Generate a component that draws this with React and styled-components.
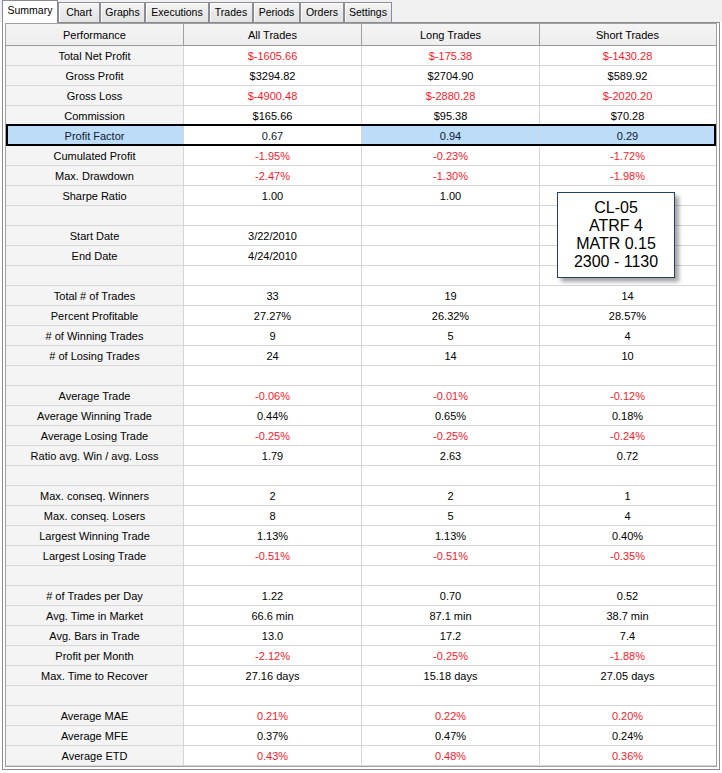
import React from "react";
import styled, { createGlobalStyle, css } from "styled-components";

const Global = createGlobalStyle`
  html, body { margin: 0; padding: 0; background: #ffffff; }
  body { font-family: "Liberation Sans", Arial, sans-serif; font-size: 11px; color: #000; }
`;

const Page = styled.div`
  width: 722px;
  height: 773px;
  position: relative;
  overflow: hidden;
`;

const TabStrip = styled.div`
  display: flex;
  align-items: flex-end;
  height: 22px;
  padding-left: 2px;
  background: #f0f0f0;
`;

const Tab = styled.div`
  box-sizing: border-box;
  width: ${(p) => p.$w}px;
  display: flex;
  justify-content: center;
  align-items: flex-start;
  font-size: 10.5px;
  line-height: 14px;
  color: #000;
  border: 1px solid #898c95;
  border-bottom: none;
  ${(p) =>
    p.$active
      ? css`
          height: 23px;
          margin-bottom: -1px;
          padding-top: 2px;
          background: #ffffff;
          position: relative;
          z-index: 2;
        `
      : css`
          height: 20px;
          padding-top: 2px;
          background: linear-gradient(#f5f5f5, #e8e8e8 60%, #e3e3e3);
          box-shadow: inset 1px 1px 0 #fcfcfc;
        `}
`;

const Panel = styled.div`
  box-sizing: border-box;
  margin-left: 2px;
  width: 718px;
  border: 1px solid #898c95;
  padding: 0 2px 2px 2px;
  background: #ffffff;
`;

const Grid = styled.div`
  position: relative;
  border: 1px solid #a0a0a0;
  background: #ffffff;
`;

const COLS = "178px 178px 178px 176px";

const HeaderRow = styled.div`
  display: grid;
  grid-template-columns: ${COLS};
  height: 22px;
  box-sizing: border-box;
  border-bottom: 1px solid #9a9a9a;
`;

const HeaderCell = styled.div`
  box-sizing: border-box;
  display: flex;
  align-items: center;
  justify-content: center;
  padding-top: 2px;
  background: linear-gradient(#f4f4f4, #eeeeee);
  border-right: 1px solid ${(p) => (p.$last ? "transparent" : "#a0a0a0")};
  line-height: 19px;
  color: #000;
`;

const Row = styled.div`
  display: grid;
  grid-template-columns: ${COLS};
  height: 20px;
  box-sizing: border-box;
  border-bottom: 1px solid #d6d6d6;
  position: relative;
  ${(p) =>
    p.$selected &&
    css`
      &::after {
        content: "";
        position: absolute;
        left: 0;
        right: 0;
        top: -2px;
        bottom: -1px;
        border: 2px solid #000;
        pointer-events: none;
      }
    `}
`;

const Cell = styled.div`
  box-sizing: border-box;
  display: flex;
  align-items: center;
  justify-content: center;
  padding-top: 2px;
  line-height: 17px;
  white-space: nowrap;
  border-right: 1px solid ${(p) => (p.$last ? "transparent" : "#d6d6d6")};
  background: ${(p) =>
    p.$selected ? (p.$current ? "#ffffff" : "#bcdcf8") : p.$label ? "#f4f4f4" : "#ffffff"};
  color: ${(p) => (p.$neg ? "#f41a2c" : p.$selected ? "#0f1a33" : "#000")};
`;

const Note = styled.div`
  position: absolute;
  left: 551px;
  top: 168px;
  width: 118px;
  height: 86px;
  box-sizing: border-box;
  border: 1px solid #22406b;
  background: #ffffff;
  box-shadow: 4px 4px 4px rgba(0, 0, 0, 0.35);
  display: flex;
  flex-direction: column;
  align-items: center;
  justify-content: center;
  font-size: 16px;
  line-height: 18px;
  color: #000;
  z-index: 3;
`;

const tabs = [
  ["Summary", 56, true],
  ["Chart", 42],
  ["Graphs", 45],
  ["Executions", 64],
  ["Trades", 44],
  ["Periods", 47],
  ["Orders", 44],
  ["Settings", 48],
];

// [label, all, long, short, negative?, selected?]
const rows = [
  ["Total Net Profit", "$-1605.66", "$-175.38", "$-1430.28", true],
  ["Gross Profit", "$3294.82", "$2704.90", "$589.92"],
  ["Gross Loss", "$-4900.48", "$-2880.28", "$-2020.20", true],
  ["Commission", "$165.66", "$95.38", "$70.28"],
  ["Profit Factor", "0.67", "0.94", "0.29", false, true],
  ["Cumulated Profit", "-1.95%", "-0.23%", "-1.72%", true],
  ["Max. Drawdown", "-2.47%", "-1.30%", "-1.98%", true],
  ["Sharpe Ratio", "1.00", "1.00", ""],
  ["", "", "", ""],
  ["Start Date", "3/22/2010", "", ""],
  ["End Date", "4/24/2010", "", ""],
  ["", "", "", ""],
  ["Total # of Trades", "33", "19", "14"],
  ["Percent Profitable", "27.27%", "26.32%", "28.57%"],
  ["# of Winning Trades", "9", "5", "4"],
  ["# of Losing Trades", "24", "14", "10"],
  ["", "", "", ""],
  ["Average Trade", "-0.06%", "-0.01%", "-0.12%", true],
  ["Average Winning Trade", "0.44%", "0.65%", "0.18%"],
  ["Average Losing Trade", "-0.25%", "-0.25%", "-0.24%", true],
  ["Ratio avg. Win / avg. Loss", "1.79", "2.63", "0.72"],
  ["", "", "", ""],
  ["Max. conseq. Winners", "2", "2", "1"],
  ["Max. conseq. Losers", "8", "5", "4"],
  ["Largest Winning Trade", "1.13%", "1.13%", "0.40%"],
  ["Largest Losing Trade", "-0.51%", "-0.51%", "-0.35%", true],
  ["", "", "", ""],
  ["# of Trades per Day", "1.22", "0.70", "0.52"],
  ["Avg. Time in Market", "66.6 min", "87.1 min", "38.7 min"],
  ["Avg. Bars in Trade", "13.0", "17.2", "7.4"],
  ["Profit per Month", "-2.12%", "-0.25%", "-1.88%", true],
  ["Max. Time to Recover", "27.16 days", "15.18 days", "27.05 days"],
  ["", "", "", ""],
  ["Average MAE", "0.21%", "0.22%", "0.20%", true],
  ["Average MFE", "0.37%", "0.47%", "0.24%"],
  ["Average ETD", "0.43%", "0.48%", "0.36%", true],
];

export default function App() {
  return (
    <Page>
      <Global />
      <TabStrip>
        {tabs.map(([t, w, a]) => (
          <Tab key={t} $w={w} $active={a}>
            {t}
          </Tab>
        ))}
      </TabStrip>
      <Panel>
        <Grid>
          <HeaderRow>
            <HeaderCell>Performance</HeaderCell>
            <HeaderCell>All Trades</HeaderCell>
            <HeaderCell>Long Trades</HeaderCell>
            <HeaderCell $last>Short Trades</HeaderCell>
          </HeaderRow>
          {rows.map(([label, a, l, s, neg, sel], i) => (
            <Row key={i} $selected={sel}>
              <Cell $label $selected={sel}>{label}</Cell>
              <Cell $neg={neg} $selected={sel} $current>{a}</Cell>
              <Cell $neg={neg} $selected={sel}>{l}</Cell>
              <Cell $neg={neg} $selected={sel} $last>{s}</Cell>
            </Row>
          ))}
          <Note>
            <span>CL-05</span>
            <span>ATRF 4</span>
            <span>MATR 0.15</span>
            <span>2300 - 1130</span>
          </Note>
        </Grid>
      </Panel>
    </Page>
  );
}
